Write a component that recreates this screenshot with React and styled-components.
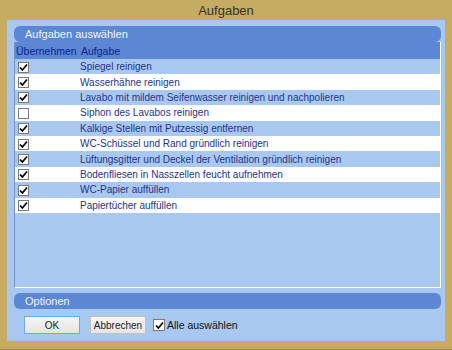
import React, { useState } from "react";
import styled, { createGlobalStyle } from "styled-components";

const Global = createGlobalStyle`
  html, body { margin: 0; padding: 0; background: #c6ab62; }
  * { box-sizing: border-box; }
`;

const TASKS = [
  ["Spiegel reinigen", true],
  ["Wasserhähne reinigen", true],
  ["Lavabo mit mildem Seifenwasser reinigen und nachpolieren", true],
  ["Siphon des Lavabos reinigen", false],
  ["Kalkige Stellen mit Putzessig entfernen", true],
  ["WC-Schüssel und Rand gründlich reinigen", true],
  ["Lüftungsgitter und Deckel der Ventilation gründlich reinigen", true],
  ["Bodenfliesen in Nasszellen feucht aufnehmen", true],
  ["WC-Papier auffüllen", true],
  ["Papiertücher auffüllen", true],
];

const Window = styled.div`
  width: 452px;
  height: 350px;
  background: #c6ab62;
  display: flex;
  flex-direction: column;
  padding: 0 7px 8px 7px;
  font-family: "Liberation Sans", sans-serif;
  border-bottom: 1px solid #9c8648;
`;

const TitleBar = styled.div`
  height: 22px;
  display: flex;
  align-items: center;
  justify-content: center;
  font-size: 13px;
  color: #3a3320;
`;

const Panel = styled.div`
  flex: 1;
  background: #a9c8ef;
  display: flex;
  flex-direction: column;
  padding: 6px 4px 7px 7px;
`;

const GroupHeader = styled.div`
  height: 16px;
  flex-shrink: 0;
  background: #5b87d5;
  border-radius: 6px;
  color: #eef4ff;
  font-size: 11px;
  padding-left: 11px;
  display: flex;
  align-items: center;
  margin-top: ${(p) => p.$mt || 0}px;
`;

const Table = styled.div`
  height: 246px;
  flex-shrink: 0;
  border-right: 1px solid #ffffff;
  border-bottom: 1px solid #ffffff;
  border-left: 1px solid #6f93cf;
  display: flex;
  flex-direction: column;
`;

const Row = styled.div`
  display: grid;
  grid-template-columns: 65px 1fr;
  align-items: center;
  height: ${(p) => (p.$head ? 17 : 15.4)}px;
  flex-shrink: 0;
  background: ${(p) => (p.$head ? "#5b87d5" : p.$alt ? "#ffffff" : "#a9c8ef")};
  color: #24338f;
  font-size: ${(p) => (p.$head ? 10.5 : 10)}px;
  white-space: nowrap;
`;

const HeadCell = styled.div`
  padding-left: 1px;
  color: #0f1f8c;
`;

const Cell = styled.div``;

const Box = styled.span`
  width: ${(p) => p.$size}px;
  height: ${(p) => p.$size}px;
  border: 1px solid #7a7a7a;
  background: #ffffff;
  display: inline-flex;
  align-items: center;
  justify-content: center;
  margin-left: ${(p) => p.$ml}px;
  vertical-align: middle;
`;

const Footer = styled.div`
  display: flex;
  align-items: center;
  margin-top: 7px;
  padding-left: 10px;
`;

const Button = styled.button`
  width: 56px;
  height: 18px;
  padding: 0;
  margin-right: 10px;
  font-size: 10px;
  font-family: "Liberation Sans", sans-serif;
  color: #222;
  background: linear-gradient(#f6f6f6, #e4e4e4);
  border: 1px solid ${(p) => (p.$focus ? "#6fa8e6" : "#c0c0c0")};
  border-radius: 0;
`;

const CheckLabel = styled.label`
  display: flex;
  align-items: center;
  gap: 2px;
  font-size: 10.5px;
  color: #111;
  margin-left: -3px;
`;

function Check({ on, ml = 3, size = 11 }) {
  return (
    <Box $ml={ml} $size={size}>
      {on && (
        <svg width="9" height="9" viewBox="0 0 9 9">
          <path d="M1 4.5 L3.4 7 L8 1.5" fill="none" stroke="#000" strokeWidth="1.8" />
        </svg>
      )}
    </Box>
  );
}

export default function App() {
  const [tasks, setTasks] = useState(TASKS);

  const toggle = (i) =>
    setTasks(tasks.map((t, j) => (j === i ? [t[0], !t[1]] : t)));

  return (
    <>
      <Global />
      <Window>
        <TitleBar>Aufgaben</TitleBar>
        <Panel>
          <GroupHeader>Aufgaben auswählen</GroupHeader>
          <Table>
            <Row $head>
              <HeadCell>Übernehmen</HeadCell>
              <HeadCell>Aufgabe</HeadCell>
            </Row>
            {tasks.map(([name, on], i) => (
              <Row key={name} $alt={i % 2 === 1} onClick={() => toggle(i)}>
                <Cell>
                  <Check on={on} />
                </Cell>
                <Cell>{name}</Cell>
              </Row>
            ))}
          </Table>
          <GroupHeader $mt={5}>Optionen</GroupHeader>
          <Footer>
            <Button $focus>OK</Button>
            <Button>Abbrechen</Button>
            <CheckLabel>
              <Check on ml={0} size={12} />
              Alle auswählen
            </CheckLabel>
          </Footer>
        </Panel>
      </Window>
    </>
  );
}
